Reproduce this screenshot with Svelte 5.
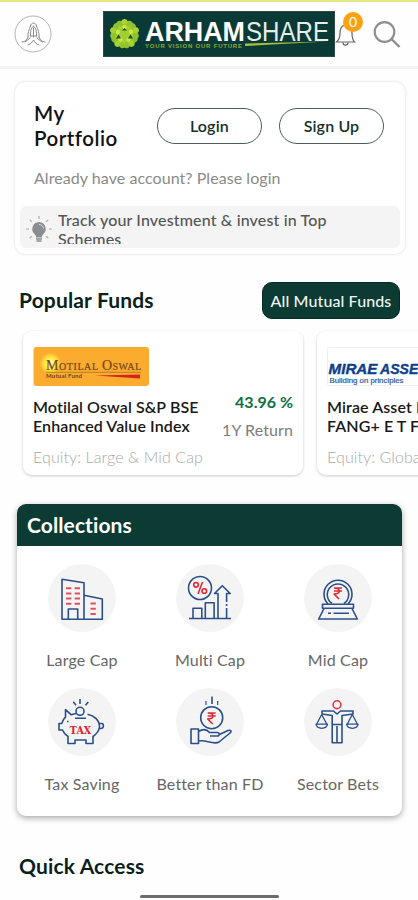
<script lang="ts">
    let notifications = 0;

    let funds = [
        {
            id: 'motilal',
            name: ['Motilal Oswal S&P BSE', 'Enhanced Value Index'],
            category: 'Equity: Large & Mid Cap',
            returns: '43.96 %',
        },
        {
            id: 'mirae',
            name: ['Mirae Asset NYSE', 'FANG+ E T F'],
            category: 'Equity: Global',
            returns: '41.20 %',
        },
    ];

    let collections = [
        { icon: 'large', label: 'Large Cap' },
        { icon: 'multi', label: 'Multi Cap' },
        { icon: 'mid', label: 'Mid Cap' },
        { icon: 'tax', label: 'Tax Saving' },
        { icon: 'fd', label: 'Better than FD' },
        { icon: 'sector', label: 'Sector Bets' },
    ];

    const petals = [0, 72, 144, 216, 288];
    const rays = [0, 45, 90, 135, 225, 270, 315];
</script>

<div class="app">
    <header class="topbar">
        <svg class="avatar" width="38" height="38" viewBox="0 0 38 38">
            <circle cx="19" cy="19" r="18" fill="#fff" stroke="#b4b4b4" stroke-width="1" />
            <g fill="none" stroke="#8c8c8c" stroke-width="1" stroke-linecap="round">
                <path d="M16.500 11c0-4 6-4 6 0" />
                <path d="M16.500 11c-1.500 4-3 7-2.500 11M22.500 11c1.500 4 3 7 2.500 11" />
                <path d="M19.500 11c-2.500 2-3.500 6-3 10M19.500 11c2.500 2 3.500 6 3 10M19.500 13v9M16.500 21h6" />
                <path d="M14 22c-1 3-3 5-6 5M25 22c1 3 3 5 6 5" />
                <path d="M11 27l5-4M28 27l-5-4" />
                <path d="M14 30c3-1 4-2.500 5.500-5 1.500 2.500 2.500 4 5.500 5" />
            </g>
        </svg>

        <svg class="brand" width="232" height="46" viewBox="0 0 232 46">
            <rect width="232" height="46" fill="#0a3a35" />
            <rect x="0.5" y="0.5" width="231" height="45" fill="none" stroke="#2d4a48" />
            <g transform="translate(21.500 23)">
                {#each petals as angle}
                    <g transform="rotate({angle})">
                        <circle cx="-4.500" cy="-9.500" r="3.800" fill="#8fc22e" />
                        <circle cx="4.500" cy="-9.500" r="3.800" fill="#8fc22e" />
                        <circle cx="0" cy="-12" r="3" fill="#a6d234" />
                        <path d="M-7-8L0 1 7-8z" fill="#a3cf30" />
                        <circle cx="0" cy="-7" r="2.200" fill="#cfe645" />
                    </g>
                {/each}
                <path d="M-8.500 4.500l2.500-4 2.500 4zM3.500 4.500l2.500-4 2.500 4zM-2.500-3.500h5L0-6z" fill="#17502f" />
            </g>
            <text x="42" y="29.500" font-size="27" font-weight="700" fill="#fff" textLength="100" lengthAdjust="spacingAndGlyphs">ARHAM</text>
            <text x="143" y="29.500" font-size="27.500" fill="#e6eeec" textLength="83" lengthAdjust="spacingAndGlyphs">SHARE</text>
            <text x="42" y="36.500" font-size="6" font-weight="700" fill="#8fa83a" textLength="97">YOUR VISION OUR FUTURE</text>
            <path d="M142 32.500l82-2-82 4.500z" fill="#a5c23a" />
        </svg>

        <div class="bell">
            <svg width="22" height="26" viewBox="0 0 22 26">
                <g fill="none" stroke="#666" stroke-width="1.200">
                    <path d="M10 3c-4 1-5 4-5 8 0 5-1 7-3.500 9h18c-2-2-2.500-4-2.500-9 0-4-2-7-5-8" />
                    <path d="M8 20.500c0 3.500 5 3.500 5 0" />
                </g>
            </svg>
            <span class="badge">{notifications}</span>
        </div>

        <svg class="search" width="28" height="29" viewBox="0 0 28 29" fill="none" stroke="#8e8e8e">
            <circle cx="11.500" cy="12" r="9.800" stroke-width="2.200" />
            <path d="M18.500 19l8 8" stroke-width="2.400" />
        </svg>
    </header>

    <section class="portfolio">
        <div class="portfolio-top">
            <h2>My<br />Portfolio</h2>
            <button class="pill">Login</button>
            <button class="pill">Sign Up</button>
        </div>
        <p class="hint">Already have account? Please login</p>
        <div class="tip">
            <svg width="28" height="30" viewBox="0 0 28 30">
                <g transform="translate(14 14)" stroke="#aaa" stroke-width="1.200">
                    {#each rays as angle}
                        <path d="M0-10v-3" transform="rotate({angle})" />
                    {/each}
                </g>
                <path d="M14 7a7 7 0 0 0-4 12.500c1 1 1 2 1 3h6c0-1 0-2 1-3A7 7 0 0 0 14 7z" fill="#8b8e91" />
                <path d="M11 24h6M11.500 26h5" stroke="#8b8e91" stroke-width="1.500" />
                <path d="M14 9.500c2.500 0 4 1.500 4.500 4" fill="none" stroke="#ddd" />
            </svg>
            <p>Track your Investment &amp; invest in Top<br />Schemes</p>
        </div>
    </section>

    <div class="section-head">
        <h3>Popular Funds</h3>
        <button class="all">All Mutual Funds</button>
    </div>

    <div class="funds">
        {#each funds as fund (fund.id)}
            <article class="fund">
                {#if fund.id === 'motilal'}
                    <svg class="fund-logo" width="116" height="39" viewBox="0 0 116 39">
                        <defs>
                            <radialGradient id="sun">
                                <stop offset="0" stop-color="#fffbd0" />
                                <stop offset="0.600" stop-color="#ffe82e" />
                                <stop offset="1" stop-color="#fbb040" />
                            </radialGradient>
                        </defs>
                        <rect x="0.500" width="115.500" height="39" rx="3" fill="#fbab2e" />
                        <circle cx="17.500" cy="16.500" r="10.500" fill="url(#sun)" />
                        <g class="serif" fill="#74471a" stroke="#74471a" stroke-width="0.200">
                            <text x="13" y="23" font-size="14" textLength="52"><tspan>M</tspan><tspan font-size="10">OTILAL</tspan></text>
                            <text x="69" y="23" font-size="14" textLength="39"><tspan>O</tspan><tspan font-size="10">SWAL</tspan></text>
                        </g>
                        <path d="M13 25.300h95" stroke="#a77622" stroke-width="0.800" />
                        <text x="13" y="30.500" font-size="6" font-weight="700" fill="#6b451a" textLength="36">Mutual Fund</text>
                        <path d="M62 28.500l45-1v4z" fill="#d8231f" />
                    </svg>
                {:else}
                    <svg class="fund-logo" width="116" height="39" viewBox="0 0 116 39">
                        <rect x="0.500" y="0.500" width="115" height="38" rx="2" fill="#fff" stroke="#eee" />
                        <g class="sans">
                            <text x="1.500" y="26.500" font-size="15" font-weight="700" font-style="italic" fill="#0f3f8c" stroke="#0f3f8c" stroke-width="0.400" textLength="49" lengthAdjust="spacingAndGlyphs">MIRAE</text>
                            <text x="53" y="26.500" font-size="15" font-weight="700" font-style="italic" fill="#0f3f8c" stroke="#0f3f8c" stroke-width="0.400" textLength="47" lengthAdjust="spacingAndGlyphs">ASSET</text>
                            <text x="2.500" y="35.500" font-size="7" fill="#2f5a9e" stroke="#2f5a9e" stroke-width="0.200" textLength="74" lengthAdjust="spacingAndGlyphs">Building on principles</text>
                        </g>
                    </svg>
                {/if}
                <div class="fund-body">
                    <h4>{fund.name[0]}<br />{fund.name[1]}</h4>
                    <div class="fund-return">
                        <strong>{fund.returns}</strong>
                        <span>1Y Return</span>
                    </div>
                </div>
                <p class="category">{fund.category}</p>
            </article>
        {/each}
    </div>

    <section class="collections">
        <h3>Collections</h3>
        <div class="grid">
            {#each collections as item (item.icon)}
                <div class="item">
                    <svg width="68" height="68" viewBox="0 0 68 68" fill="none" stroke="#2a4f8a" stroke-width="1.600" stroke-linejoin="round">
                        <circle cx="34" cy="34" r="34" fill="#f4f4f4" stroke="none" />
                        {#if item.icon === 'large'}
                            <path d="M14 15.300l22 3.400v36.600H14zM36 31.300l18.300 3.700v20.300H36M20.300 55V45h9.400v10" />
                            <path d="M18 24.300h5.300M26.700 24.300h5.300M18 29.600h5.300M26.700 29.600h5.300M18 34.600h5.300M26.700 34.600h5.300M18 39.800h5.300M26.700 39.800h5.300M42.500 39.500h5.300M42.500 44.800h5.300M42.500 50h5.300" stroke="#de5160" stroke-width="2" />
                        {:else if item.icon === 'multi'}
                            <circle cx="24" cy="24" r="11.500" />
                            <g stroke="#e02733">
                                <circle cx="20" cy="20.800" r="2.300" />
                                <circle cx="28.300" cy="27" r="2.300" />
                                <path d="M26.500 18l-4.500 12" />
                            </g>
                            <path d="M13 54.500h42M17 54V44.300h8.800V54M29.300 54V38.700h8.800V54M42 54V29.500h-3.500l7.800-7.800 7.900 7.800h-3.600v8.500M50.600 40v2M50.600 44v10" />
                        {:else if item.icon === 'mid'}
                            <path d="M24 40a14 14 0 1 1 20 0M28 39.500a10.700 10.700 0 1 1 12 0" />
                            <path d="M18.500 40.300h31v4h-31zM20 44.500L14.700 55h38.600L48 44.500M24 49.300h3M29.500 49.300H45" />
                            <path d="M30 24h8M30 27h8M30 24c7 0 7 6 0 6l5 5" stroke="#e02733" />
                        {:else if item.icon === 'tax'}
                            <path d="M28 25.500l-5 1.200-5.500-5v7.500c-2.200 1.800-3 4-3.800 6.300H11v6.500h3.500c1.200 3 3 5 5.500 6.500v7h7V52h11v3.500h7v-7c3.500-2.500 6-6 6.500-9.500 0-6.500-5-11.500-12-12.700M51 35.500h3c2 0 2 5-1 5h-2" />
                            <circle cx="32" cy="23.300" r="4" />
                            <path d="M27 30.300h11M32 11v5M25.300 13.700l2.700 3.600M40.300 14l-2.800 3.300M19 33.500h1.500" />
                            <text class="tax" x="21.800" y="45.500" font-size="10.500" stroke="none" fill="#dc1f2b" textLength="21.500" lengthAdjust="spacingAndGlyphs">TAX</text>
                        {:else if item.icon === 'fd'}
                            <circle cx="35.700" cy="29.700" r="11" />
                            <path d="M36 8.500V16" />
                            <path d="M30 13v4M41.700 13v4" stroke-width="1.200" />
                            <path d="M15 41h7.500v14.500H15zM22.500 43.500c5-3 9-1.500 11 1h7.500c3 0 3 3.500 0 3.500h-7M43.500 46.500l8.500-4c3-1 4 1 2 2.500l-11 9c-3 2-8 .5-12-.5-3-1-5.500-1-8.500-.5" />
                            <path d="M31.700 25h8M31.700 28h8M31.700 25c7 0 7 6 0 6l5 5" stroke="#e02733" />
                        {:else}
                            <circle cx="33" cy="16.700" r="3.900" stroke="#dd3a48" />
                            <path d="M18 23h11.500l3.500 3 3.500-3H49v3l-11 1.500v27.200h-9.800V27.500L18 26z" />
                            <path d="M28 36.500h10M33 38v16" />
                            <path d="M17.700 26.500l-5 9.500M17.700 26.500l5 9.500M12 36.200h11.500c-1 5.500-10.500 5.500-11.500 0zM48.300 26.500l-5 9.500M48.300 26.500l5 9.500M42.600 36.200h11.500c-1 5.500-10.500 5.500-11.500 0z" stroke-width="1.300" />
                        {/if}
                    </svg>
                    <span>{item.label}</span>
                </div>
            {/each}
        </div>
    </section>

    <h3 class="quick">Quick Access</h3>
    <div class="home-bar"></div>
</div>

<style>
    :global(body) {
        background: #fefefe;
    }

    .app {
        box-sizing: border-box;
        display: flex;
        flex-direction: column;
        width: 418px;
        height: 900px;
        overflow: hidden;
        border-top: 2px solid #e5e685;
        font-family: Lato, "Open Sans", sans-serif;
        font-variant-ligatures: none;
        color: #111;
    }

    h2, h3, h4, p {
        margin: 0;
    }

    button {
        padding: 0;
        font-family: inherit;
        font-variant-ligatures: none;
    }

    svg {
        display: block;
        flex-shrink: 0;
    }

    .topbar {
        box-sizing: border-box;
        display: flex;
        align-items: flex-start;
        height: 67px;
        padding: 9px 0 0 14px;
        border-bottom: 3px solid #f3f3f3;
    }

    .avatar {
        margin-top: 4px;
    }

    .brand {
        margin-left: 51px;
        font-family: "Liberation Sans", Arial, sans-serif;
    }

    .bell {
        position: relative;
        margin-top: 11px;
    }

    .badge {
        position: absolute;
        top: -10px;
        left: 8px;
        width: 20px;
        height: 20px;
        border-radius: 50%;
        background: #fba214;
        color: #fff;
        font-size: 14px;
        line-height: 20px;
        text-align: center;
    }

    .search {
        margin: 9px 0 0 16px;
    }

    .portfolio {
        box-sizing: border-box;
        width: 390px;
        height: 172px;
        margin: 13px 0 0 15px;
        padding: 19px 5px 0;
        border-radius: 10px;
        background: #fff;
        box-shadow: 0 0 3px rgba(0, 0, 0, 0.16);
    }

    .portfolio-top {
        display: flex;
        align-items: flex-start;
        padding-left: 14px;
    }

    .portfolio h2 {
        width: 123px;
        font-size: 20.5px;
        font-weight: 600;
        line-height: 25px;
        letter-spacing: 0.5px;
    }

    .pill {
        box-sizing: border-box;
        width: 106px;
        height: 36px;
        margin: 7px 17px 0 0;
        padding-bottom: 1px;
        border: 1px solid #4c5e5a;
        border-radius: 18px;
        background: #fff;
        color: #12302b;
        font-size: 16px;
        font-weight: 600;
        letter-spacing: 0.15px;
        transform: translateX(1px);
    }

    .hint {
        margin: 16px 0 0 14px;
        color: #8a8a8a;
        font-size: 16px;
        line-height: 22px;
        letter-spacing: 0.06px;
    }

    .tip {
        display: flex;
        height: 42px;
        margin-top: 17px;
        border-radius: 6px;
        background: #f4f4f4;
        overflow: hidden;
    }

    .tip svg {
        margin: 9px 0 0 5px;
    }

    .tip p {
        height: 34px;
        margin: 4px 0 0 5px;
        overflow: hidden;
        color: #555;
        font-size: 16px;
        font-weight: 500;
        line-height: 19px;
        letter-spacing: 0.15px;
        white-space: nowrap;
    }

    .section-head {
        display: flex;
        align-items: center;
        justify-content: space-between;
        height: 37px;
        margin: 28px 18px 0 19px;
    }

    .section-head h3,
    .quick {
        color: #0b1f1b;
        font-size: 21px;
        font-weight: 700;
        line-height: 26px;
        letter-spacing: 0.15px;
    }

    .section-head h3 {
        margin-top: -1px;
    }

    .all {
        width: 138px;
        height: 37px;
        border: 1px solid #062a24;
        border-radius: 10px;
        background: #0c3b33;
        color: #eef3f1;
        font-size: 16px;
        font-weight: 500;
        letter-spacing: 0.1px;
        white-space: nowrap;
    }

    .funds {
        display: flex;
        gap: 14px;
        margin: 12px 0 0 23px;
    }

    .fund {
        box-sizing: border-box;
        flex: 0 0 280px;
        height: 144px;
        padding: 16px 10px 0;
        border-radius: 9px;
        background: #fff;
        box-shadow: 0 1px 3px rgba(0, 0, 0, 0.2);
    }

    .fund-body {
        display: flex;
        justify-content: space-between;
        margin-top: 11px;
        white-space: nowrap;
    }

    .fund h4 {
        color: #181818;
        font-size: 16px;
        font-weight: 600;
        line-height: 19px;
        letter-spacing: 0.1px;
    }

    .fund-return {
        display: flex;
        flex-direction: column;
        align-items: flex-end;
        margin-top: -5px;
    }

    .fund-return strong {
        color: #0d7044;
        font-size: 16px;
        line-height: 20px;
    }

    .fund-return span {
        margin-top: 8px;
        color: #7c7c7c;
        font-size: 16px;
        line-height: 20px;
        letter-spacing: 0.1px;
    }

    .category {
        margin-top: 6px;
        color: #a8a8a8;
        font-size: 16px;
        font-weight: 300;
        line-height: 22px;
        letter-spacing: 0.1px;
        white-space: nowrap;
    }

    .collections {
        flex-shrink: 0;
        width: 385px;
        height: 312px;
        margin: 29px 0 0 17px;
        border-radius: 9px;
        background: #fff;
        box-shadow: 0 2px 6px rgba(0, 0, 0, 0.35);
        overflow: hidden;
    }

    .collections h3 {
        height: 42px;
        padding-left: 10px;
        background: #0c3b33;
        color: #fff;
        font-size: 21px;
        line-height: 42px;
        letter-spacing: 0.1px;
    }

    .grid {
        display: grid;
        grid-template-columns: repeat(3, 128px);
        grid-auto-rows: 124px;
        padding: 18px 0 0 1px;
    }

    .item {
        display: flex;
        flex-direction: column;
        align-items: center;
        gap: 18px;
        color: #666;
        font-size: 16px;
        line-height: 20px;
        letter-spacing: 0.15px;
    }

    .serif {
        font-family: "Liberation Serif", serif;
    }

    .sans {
        font-family: "Liberation Sans", Arial, sans-serif;
    }

    .tax {
        font-family: "DejaVu Serif", serif;
        font-weight: 700;
    }

    .quick {
        margin: 37px 0 0 19px;
    }

    .home-bar {
        flex-shrink: 0;
        width: 139px;
        height: 3px;
        margin: 16px 0 0 140px;
        border-radius: 2px;
        background: #6c6c6c;
    }
</style>
